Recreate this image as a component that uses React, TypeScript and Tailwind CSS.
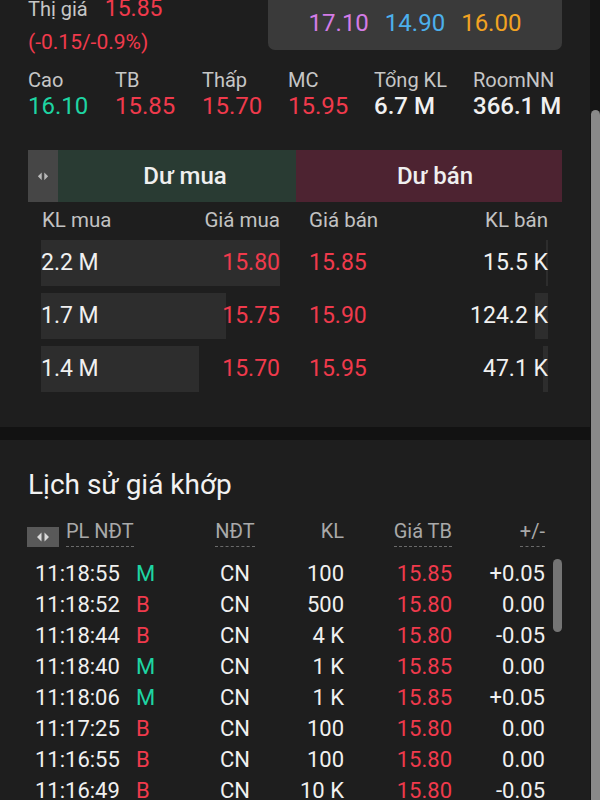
import React from "react";

const RED = "text-[#f03a4c]";
const GREEN = "text-[#1ed5a3]";
const WHITE = "text-[#f0f0f0]";

const stats = [
  { label: "Cao", value: "16.10", color: GREEN, w: "w-[87px]", bold: false },
  { label: "TB", value: "15.85", color: RED, w: "w-[87px]", bold: false },
  { label: "Thấp", value: "15.70", color: RED, w: "w-[86px]", bold: false },
  { label: "MC", value: "15.95", color: RED, w: "w-[86px]", bold: false },
  { label: "Tổng KL", value: "6.7 M", color: WHITE, w: "w-[99px]", bold: true },
  { label: "RoomNN", value: "366.1 M", color: WHITE, w: "flex-1", bold: true },
];

const book = [
  { buyVol: "2.2 M", buyQty: 2200, buy: "15.80", sell: "15.85", sellVol: "15.5 K", sellQty: 15.5 },
  { buyVol: "1.7 M", buyQty: 1700, buy: "15.75", sell: "15.90", sellVol: "124.2 K", sellQty: 124.2 },
  { buyVol: "1.4 M", buyQty: 1450, buy: "15.70", sell: "15.95", sellVol: "47.1 K", sellQty: 47.1 },
];
const maxQty = 2200;

const trades = [
  { time: "11:18:55", side: "M", kl: "100", price: "15.85", chg: "+0.05" },
  { time: "11:18:52", side: "B", kl: "500", price: "15.80", chg: "0.00" },
  { time: "11:18:44", side: "B", kl: "4 K", price: "15.80", chg: "-0.05" },
  { time: "11:18:40", side: "M", kl: "1 K", price: "15.85", chg: "0.00" },
  { time: "11:18:06", side: "M", kl: "1 K", price: "15.85", chg: "+0.05" },
  { time: "11:17:25", side: "B", kl: "100", price: "15.80", chg: "0.00" },
  { time: "11:16:55", side: "B", kl: "100", price: "15.80", chg: "0.00" },
  { time: "11:16:49", side: "B", kl: "10 K", price: "15.80", chg: "-0.05" },
];

const Arrows = ({ size = 14 }: { size?: number }) => (
  <svg width={size} height={size * 0.72} viewBox="0 0 14 10">
    <path d="M5.5 0.5 L1 5 L5.5 9.5 Z M8.5 0.5 L13 5 L8.5 9.5 Z" fill="currentColor" />
  </svg>
);

const App = () => {
  return (
    <div className="w-[600px] h-[800px] overflow-hidden flex bg-[#1e1e1e] font-['Roboto','Liberation_Sans',sans-serif]">
      <div className="w-[590px] shrink-0">
        {/* top: price + order book */}
        <div className="px-[28px] pb-[35px]">
          <div className="flex justify-between items-start">
            <div className="flex flex-col">
              <div className="-mt-[2px] flex items-center h-[22px] leading-[22px]">
                <span className="text-[20px] text-[#c6c6c6]">Thị giá</span>
                <span className={`ml-[17px] text-[23px] ${RED}`}>15.85</span>
              </div>
              <div className={`mt-[10px] leading-[24px] text-[21px] ${RED}`}>(-0.15/-0.9%)</div>
            </div>
            <div className="-mt-[12px] h-[62px] w-[294px] pt-[8px] rounded-[7px] bg-[#3a3a3a] flex items-center justify-center gap-[16px] text-[24px]">
              <span className="text-[#d47ce6]">17.10</span>
              <span className="text-[#4cb0ec]">14.90</span>
              <span className="text-[#f2a322]">16.00</span>
            </div>
          </div>

          <div className="mt-[14px] flex">
            {stats.map((s) => (
              <div key={s.label} className={`${s.w} flex flex-col whitespace-nowrap`}>
                <span className="text-[20px] leading-[24px] text-[#c6c6c6]">{s.label}</span>
                <span className={`text-[24px] leading-[28px] ${s.color} ${s.bold ? "font-medium" : ""}`}>
                  {s.value}
                </span>
              </div>
            ))}
          </div>

          <div className="mt-[30px] h-[52px] flex text-[24px] font-medium text-[#efefef]">
            <div className="w-[30px] bg-[#464646] flex items-center justify-center text-[#b9b9b9]">
              <Arrows size={12} />
            </div>
            <div className="w-[238px] bg-[#293b33] flex items-center justify-center pl-[16px]">Dư mua</div>
            <div className="flex-1 bg-[#4d2331] flex items-center justify-center pl-[12px]">Dư bán</div>
          </div>

          <div className="mt-[6px] flex text-[20.5px] leading-[24px] text-[#c2c2c2]">
            <div className="w-[268px] pl-[14px] pr-[16px] flex justify-between">
              <span>KL mua</span>
              <span>Giá mua</span>
            </div>
            <div className="flex-1 pl-[13px] pr-[14px] flex justify-between">
              <span>Giá bán</span>
              <span>KL bán</span>
            </div>
          </div>

          <div className="mt-[8px] flex flex-col gap-[7px] text-[23px]">
            {book.map((r) => (
              <div key={r.buy} className="h-[46px] flex">
                <div className="w-[268px] pl-[13px] pr-[16px]">
                  <div className="relative h-full flex items-center justify-between">
                    <div
                      className="absolute left-0 top-0 h-full bg-[#2d2d2d]"
                      style={{ width: `${(r.buyQty / maxQty) * 100}%` }}
                    />
                    <span className={`relative ${WHITE}`}>{r.buyVol}</span>
                    <span className={`relative ${RED}`}>{r.buy}</span>
                  </div>
                </div>
                <div className="flex-1 pl-[13px] pr-[14px]">
                  <div className="relative h-full flex items-center justify-between">
                    <div
                      className="absolute right-0 top-0 h-full bg-[#2d2d2d]"
                      style={{ width: `${Math.max((r.sellQty / maxQty) * 100, 0.8)}%` }}
                    />
                    <span className={`relative ${RED}`}>{r.sell}</span>
                    <span className={`relative ${WHITE}`}>{r.sellVol}</span>
                  </div>
                </div>
              </div>
            ))}
          </div>
        </div>

        <div className="h-[13px] bg-[#121212]" />

        {/* trade history */}
        <div>
          <div className="mt-[29px] pl-[28px] text-[28px] leading-[32px] text-[#f2f2f2]">Lịch sử giá khớp</div>

          <div className="mt-[21px] pl-[27px] flex items-end text-[20px] text-[#a9a9a9]">
            <div className="w-[169px] flex items-end">
              <div className="w-[32px] h-[20px] bg-[#595959] flex items-center justify-center text-[#d8d8d8]">
                <Arrows size={14} />
              </div>
              <span className="ml-[7px] leading-[18px] pb-[6px] border-b border-dashed border-[#6a6a6a]">PL NĐT</span>
            </div>
            <div className="w-[78px] flex justify-center">
              <span className="leading-[18px] pb-[6px] border-b border-dashed border-[#6a6a6a]">NĐT</span>
            </div>
            <div className="w-[70px] flex justify-end">
              <span className="leading-[18px] pb-[7px]">KL</span>
            </div>
            <div className="w-[108px] flex justify-end">
              <span className="leading-[18px] pb-[6px] border-b border-dashed border-[#6a6a6a]">Giá TB</span>
            </div>
            <div className="w-[93px] flex justify-end">
              <span className="leading-[18px] pb-[6px] border-b border-dashed border-[#6a6a6a]">+/-</span>
            </div>
          </div>

          <div className="relative mt-[11px] text-[22px]">
            {trades.map((t, i) => (
              <div key={i} className={`h-[31px] pl-[35px] flex items-center ${WHITE}`}>
                <span className="w-[101px]">{t.time}</span>
                <span className={`w-[60px] ${t.side === "M" ? GREEN : RED}`}>{t.side}</span>
                <span className="w-[78px] text-center">CN</span>
                <span className="w-[70px] text-right">{t.kl}</span>
                <span className={`w-[108px] text-right ${RED}`}>{t.price}</span>
                <span className="w-[93px] text-right">{t.chg}</span>
              </div>
            ))}
            <div className="absolute right-[28px] top-[1px] w-[9px] h-[73px] rounded-full bg-[#757575]" />
          </div>
        </div>
      </div>

      {/* page scrollbar */}
      <div className="w-[10px] shrink-0 flex flex-col bg-[#151515]">
        <div className="h-[110px] shrink-0" />
        <div className="flex-1 ml-[1px] rounded-t-[5px] bg-[#898989]" />
      </div>
    </div>
  );
};

export default App;
